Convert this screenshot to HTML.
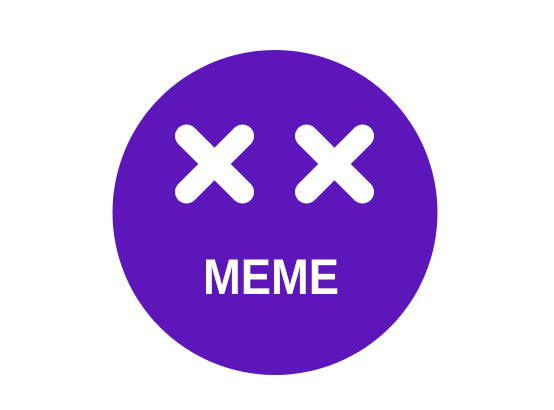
<!DOCTYPE html>
<html><head><meta charset="utf-8"><style>
html,body{margin:0;padding:0;background:#fff;width:554px;height:410px;overflow:hidden}
svg{display:block}
</style></head><body>
<svg width="554" height="410" viewBox="0 0 554 410" xmlns="http://www.w3.org/2000/svg">
<circle cx="275" cy="212.5" r="162.5" fill="#5c16b9"/>
<g stroke="#fff" stroke-width="23" stroke-linecap="round">
<line x1="186.5" y1="136" x2="242.5" y2="192"/>
<line x1="242.5" y1="136" x2="186.5" y2="192"/>
<line x1="306.5" y1="136" x2="362.5" y2="192"/>
<line x1="362.5" y1="136" x2="306.5" y2="192"/>
</g>
<text x="203" y="294" font-family="Liberation Sans, sans-serif" font-weight="bold" font-size="50" fill="#fff" textLength="136" lengthAdjust="spacingAndGlyphs">MEME</text>
</svg>
</body></html>
